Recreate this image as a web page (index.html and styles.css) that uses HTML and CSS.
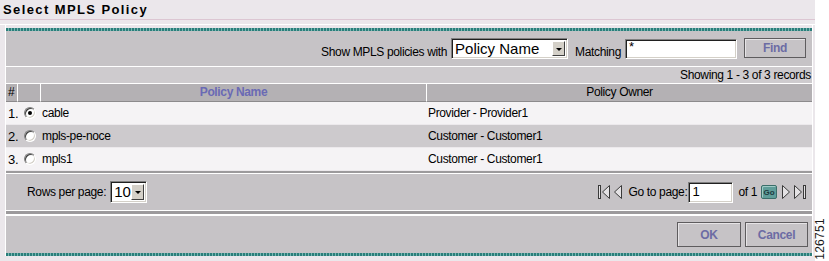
FILE: index.html
```html
<!DOCTYPE html>
<html>
<head>
<meta charset="utf-8">
<link rel="stylesheet" href="styles.css">
</head>
<body>
<div class="page">
  <div class="title">Select MPLS Policy</div>
  <div class="gap"></div>
  <div class="wline"></div>
  <div class="wrap">
    <div class="panel">
      <div class="teal"></div>
      <div class="toolbar">
        <span class="lbl">Show MPLS policies with</span>
        <div class="select sel-policy"><span class="seltext">Policy Name</span><span class="arrow"></span></div>
        <span class="lbl lbl-match">Matching</span>
        <div class="input inp-match">*</div>
        <div class="btn btn-find">Find</div>
      </div>
      <div class="info">Showing 1 - 3 of 3 records</div>
      <div class="grid">
        <div class="hc hc-num">#</div>
        <div class="hc"></div>
        <div class="hc hc-name">Policy Name</div>
        <div class="hc hc-owner">Policy Owner</div>

        <div class="c c-num light">1.</div>
        <div class="c light"><span class="radio on"></span></div>
        <div class="c c-name light">cable</div>
        <div class="c c-owner light">Provider - Provider1</div>

        <div class="c c-num dark">2.</div>
        <div class="c dark"><span class="radio"></span></div>
        <div class="c c-name dark">mpls-pe-noce</div>
        <div class="c c-owner dark">Customer - Customer1</div>

        <div class="c c-num light">3.</div>
        <div class="c light"><span class="radio"></span></div>
        <div class="c c-name light">mpls1</div>
        <div class="c c-owner light">Customer - Customer1</div>
      </div>
      <div class="pager">
        <div class="pg-left">
          <span class="lbl">Rows per page:</span>
          <div class="select sel-rows"><span class="seltext">10</span><span class="arrow"></span></div>
        </div>
        <div class="pg-right">
          <svg class="ico ico-first" width="13" height="16" viewBox="0 0 13 16"><rect x="0.5" y="1.5" width="2" height="13" fill="#e4e2e4" stroke="#3a3a3a"/><polygon points="11.5,1.5 4.5,8 11.5,14.5" fill="#e4e2e4" stroke="#3a3a3a"/></svg>
          <svg class="ico ico-prev" width="9" height="16" viewBox="0 0 9 16"><polygon points="8.5,1.5 1.5,8 8.5,14.5" fill="#e4e2e4" stroke="#3a3a3a"/></svg>
          <span class="lbl lbl-go">Go to page:</span>
          <div class="input inp-page">1</div>
          <span class="lbl lbl-of">of 1</span>
          <div class="gobtn">Go</div>
          <svg class="ico ico-next" width="9" height="16" viewBox="0 0 9 16"><polygon points="0.5,1.5 7.5,8 0.5,14.5" fill="#e4e2e4" stroke="#3a3a3a"/></svg>
          <svg class="ico ico-last" width="13" height="16" viewBox="0 0 13 16"><polygon points="1.5,1.5 8.5,8 1.5,14.5" fill="#e4e2e4" stroke="#3a3a3a"/><rect x="10.5" y="1.5" width="2" height="13" fill="#e4e2e4" stroke="#3a3a3a"/></svg>
        </div>
      </div>
      <div class="sep"></div>
      <div class="footer">
        <div class="btn btn-ok">OK</div>
        <div class="btn btn-cancel">Cancel</div>
      </div>
      <div class="teal"></div>
    </div>
  </div>
  <span class="figno">126751</span>
</div>
</body>
</html>
```
FILE: styles.css
```css
html {
  background: #ffffff;
}
body {
  margin: 0;
  font-family: "Liberation Sans", Arial, sans-serif;
  font-size: 12px;
  letter-spacing: -0.35px;
  color: #000;
}
.page {
  position: relative;
  width: 815px;
  height: 261px;
  background: #ebe7eb;
}
.title {
  height: 19px;
  line-height: 19px;
  padding-left: 3px;
  font-size: 13px;
  font-weight: bold;
  letter-spacing: 1.4px;
  border-bottom: 1px solid #dcc6d2;
}
.gap {
  height: 4px;
}
.wline {
  height: 1px;
  background: #ffffff;
}
.wrap {
  margin-left: 5px;
  width: 806px;
  border-left: 1px solid #ffffff;
  border-right: 1px solid #ffffff;
  padding-top: 3px;
}
.panel {
  background: #c6c3c6;
}
.teal {
  height: 3px;
  background: repeating-linear-gradient(90deg, #2a7e7a 0 2px, #78b6b2 2px 3px);
}
.toolbar {
  height: 35px;
  display: flex;
  align-items: center;
  justify-content: flex-end;
  padding-right: 6px;
  border-bottom: 1px solid #ffffff;
}
.lbl {
  padding-top: 6px;
  white-space: nowrap;
}
.select {
  position: relative;
  box-sizing: border-box;
  background: #ffffff;
  border: 1px solid;
  border-color: #808080 #ffffff #ffffff #808080;
  box-shadow: inset 1px 1px 0 #202020, inset -1px -1px 0 #d4d0c8;
  display: flex;
  align-items: center;
}
.seltext {
  font-size: 15px;
  letter-spacing: 0;
  padding-left: 3px;
  line-height: 16px;
}
.arrow {
  position: absolute;
  right: 2px;
  top: 2px;
  bottom: 2px;
  width: 13px;
  box-sizing: border-box;
  background: #d4d0c8;
  border: 1px solid;
  border-color: #ffffff #404040 #404040 #ffffff;
}
.arrow::after {
  content: "";
  position: absolute;
  left: 3px;
  top: 6px;
  border-left: 3px solid transparent;
  border-right: 3px solid transparent;
  border-top: 3px solid #000;
}
.sel-policy {
  width: 117px;
  height: 21px;
  margin-left: 4px;
}
.lbl-match {
  margin-left: 7px;
}
.input {
  box-sizing: border-box;
  background: #ffffff;
  border: 1px solid;
  border-color: #808080 #ffffff #ffffff #808080;
  box-shadow: inset 1px 1px 0 #202020, inset -1px -1px 0 #d4d0c8;
  padding-left: 3px;
}
.inp-match {
  width: 112px;
  height: 20px;
  margin-left: 4px;
  font-size: 13px;
  line-height: 14px;
}
.btn {
  box-sizing: border-box;
  display: flex;
  align-items: center;
  justify-content: center;
  background: #c6c3c6;
  border: 1px solid #5e5c5e;
  box-shadow: inset 1px 1px 0 #e6e4e6;
  font-weight: bold;
  color: #6c6ca4;
}
.btn-find {
  width: 62px;
  height: 20px;
  margin-left: 7px;
  margin-bottom: 1px;
}
.info {
  height: 16px;
  line-height: 16px;
  text-align: right;
  padding-right: 1px;
  background: #cecbce;
  border-bottom: 1px solid #ffffff;
}
.grid {
  display: grid;
  grid-template-columns: 12px 23px 386px 385px;
}
.hc {
  box-sizing: border-box;
  height: 18px;
  line-height: 17px;
  background: #b4b1b4;
  border-right: 1px solid #ffffff;
  border-bottom: 1px solid #8c8a8c;
}
.hc-num {
  padding-left: 2px;
}
.hc-name {
  text-align: center;
  font-weight: bold;
  color: #6a6ab4;
}
.hc-owner {
  text-align: center;
  border-right: none;
}
.c {
  box-sizing: border-box;
  height: 23px;
  border-bottom: 1px solid #ece9ec;
  display: flex;
  align-items: center;
}
.light {
  background: #f5f3f5;
}
.dark {
  background: #cdcacd;
}
.c-num {
  padding-left: 2px;
  font-size: 13px;
}
.c-name {
  padding-left: 1px;
}
.c-owner {
  padding-left: 1px;
}
.radio {
  position: relative;
  box-sizing: border-box;
  width: 12px;
  height: 12px;
  margin-left: 6px;
  border-radius: 50%;
  background: #ffffff;
  border: 1px solid;
  border-color: #808080 #ffffff #ffffff #808080;
  box-shadow: inset 1px 1px 0 #404040, inset -1px -1px 0 #d4d0c8;
}
.radio.on::after {
  content: "";
  position: absolute;
  left: 3px;
  top: 3px;
  width: 4px;
  height: 4px;
  border-radius: 50%;
  background: #000;
}
.pager {
  height: 36px;
  display: flex;
  align-items: center;
  justify-content: space-between;
  border-top: 2px solid #9c9a9c;
  box-shadow: inset 0 1px 0 #ffffff;
  padding-top: 1px;
  border-bottom: 1px solid #ffffff;
  padding-left: 21px;
  padding-right: 6px;
}
.pg-left,
.pg-right {
  display: flex;
  align-items: center;
}
.pg-left .lbl,
.pg-right .lbl {
  padding-top: 0;
}
.sel-rows {
  width: 37px;
  height: 22px;
  margin-left: 4px;
}
.ico {
  display: block;
}
.ico-prev {
  margin-left: 2px;
}
.lbl-go {
  margin-left: 7px;
}
.inp-page {
  width: 45px;
  height: 21px;
  margin-left: 1px;
  font-size: 13px;
  line-height: 18px;
}
.lbl-of {
  margin-left: 5px;
}
.gobtn {
  box-sizing: border-box;
  width: 16px;
  height: 14px;
  margin-left: 4px;
  border-radius: 2px;
  background: #5f9d99;
  border: 1px solid #3a6e6a;
  box-shadow: inset 1px 1px 0 #9fcac6;
  font-size: 8px;
  letter-spacing: 0;
  font-weight: bold;
  color: #1c3a40;
  display: flex;
  align-items: center;
  justify-content: center;
}
.ico-next {
  margin-left: 5px;
}
.ico-last {
  margin-left: 2px;
}
.sep {
  height: 3px;
  background: #9c9a9c;
  border-bottom: 2px solid #ffffff;
}
.footer {
  height: 37px;
  display: flex;
  align-items: center;
  justify-content: flex-end;
  padding-right: 4px;
}
.btn-ok {
  width: 64px;
  height: 25px;
}
.btn-cancel {
  width: 63px;
  height: 25px;
  margin-left: 4px;
}
.figno {
  position: absolute;
  left: 814px;
  top: 218px;
  writing-mode: vertical-rl;
  transform: rotate(180deg);
  font-size: 12px;
  line-height: 12px;
  color: #1a1a1a;
  letter-spacing: 0.3px;
}
```
